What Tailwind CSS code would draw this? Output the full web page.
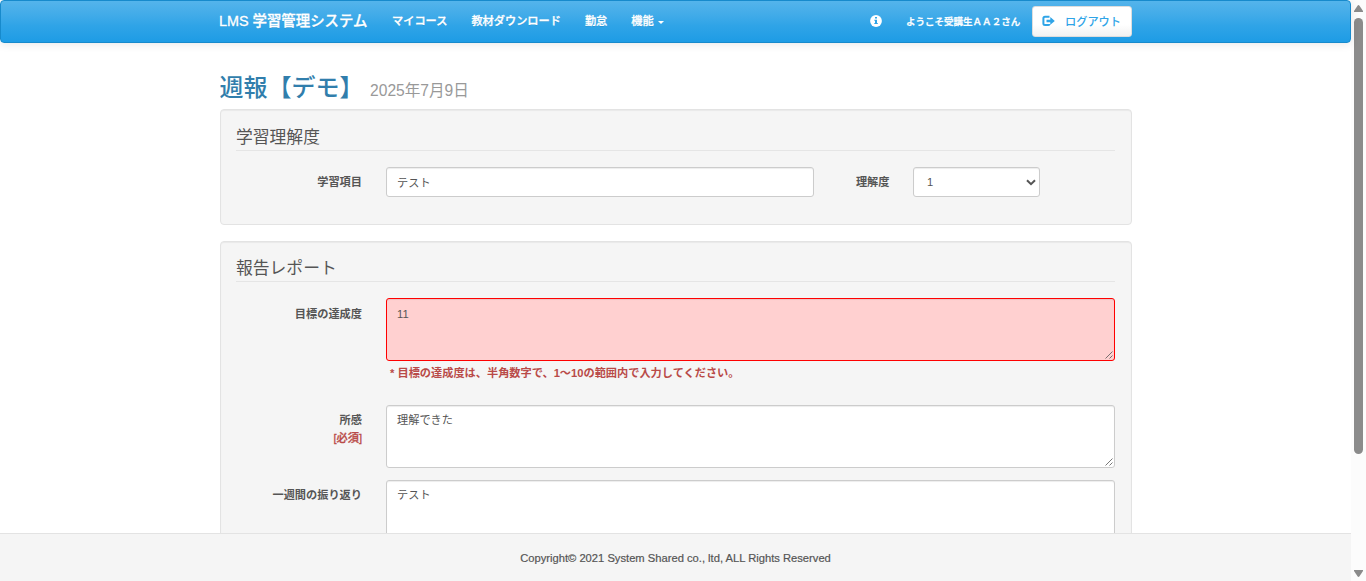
<!DOCTYPE html>
<html lang="ja">
<head>
<meta charset="utf-8">
<title>週報【デモ】</title>
<script src="https://cdn.jsdelivr.net/npm/@tailwindcss/browser@4"></script>
</head>
<body class="flex h-[581px] overflow-hidden bg-white font-['Liberation_Sans','Noto_Sans_CJK_JP',sans-serif] text-[11.2px] leading-[18px] text-[#555555]">
  <div class="flex h-[581px] w-[1351px] flex-none flex-col">
    <header class="relative z-10 flex h-[43px] flex-none rounded-[4px] border border-[#178acc] bg-linear-to-b from-[#54b4eb] via-[#2fa4e7] via-60% to-[#1d9ce5] pl-[218px] font-medium text-white shadow-[0_1px_10px_rgba(0,0,0,0.1)]">
      <div class="flex h-[41px] w-[913px] items-center whitespace-nowrap">
        <a class="w-[173px] -mt-0.5 text-[14.4px] [-webkit-text-stroke:0.3px_white] [text-shadow:0_1px_0_rgba(0,0,0,0.1)]">LMS 学習管理システム</a>
        <nav class="-mt-0.5 flex flex-1 items-center gap-[24px] [-webkit-text-stroke:0.3px_white] [text-shadow:0_1px_0_rgba(0,0,0,0.1)]">
          <a>マイコース</a>
          <a>教材ダウンロード</a>
          <a>勤怠</a>
          <a class="flex items-center gap-1">機能<span class="mt-[3px] border-x-[3px] border-t-[3px] border-x-transparent border-t-white"></span></a>
        </nav>
        <svg class="-mt-0.5 mr-6 size-3 flex-none" viewBox="0 0 12 12"><circle cx="6" cy="6" r="5.9" fill="#fff"/><path d="M5 2h2v1.6H5zM4.3 4.7H7v3.4h.8v1H4.300v-1H5V5.700h-.7z" fill="#2fa4e7"/></svg>
        <span class="w-[126px] text-[9.52px] [-webkit-text-stroke:0.3px_white]">ようこそ受講生ＡＡ２さん</span>
        <button class="flex h-[31px] w-[100px] items-center rounded-[3px] border border-[#dddddd] bg-linear-to-b from-white via-white via-60% to-[#f2f2f2] pl-[9px] text-[#2fa4e7]">
          <svg class="-mt-0.5 mr-[10px] h-3 w-[13px]" viewBox="0 0 13 12"><path d="M7.500 1.800H3Q1.400 1.800 1.400 3.300V8.500Q1.400 10 3 10H6.300Q7.500 10 7.500 9" fill="none" stroke="#2fa4e7" stroke-width="2"/><path d="M4.500 4.700H8.300V2L12.800 6 8.300 9.800V7.300H4.500z" fill="#2fa4e7"/></svg>
          <span>ログアウト</span>
        </button>
      </div>
    </header>

    <main class="ml-[220px] h-[490px] w-[912px] flex-none overflow-hidden">
      <h2 class="-ml-[0.6px] mt-[30px] flex h-[36px] items-baseline gap-[6.67px] whitespace-nowrap text-[24px] leading-[30px] font-medium text-[#317eac]"><span>週報【デモ】</span><small class="text-[15.6px] font-normal text-[#999999]">2025年7月9日</small></h2>

      <section class="h-[116px] rounded-[4px] border border-[#e3e3e3] bg-[#f5f5f5] px-[15px] shadow-[inset_0_1px_1px_rgba(0,0,0,0.05)]">
        <h3 class="h-[41px] w-[879px] border-b border-[#e5e5e5] pt-[16px] text-[16.8px] leading-6">学習理解度</h3>
        <div class="flex pt-4">
          <label class="w-[126px] pt-[6px] text-right font-bold">学習項目</label>
          <input value="テスト" class="ml-6 h-[30px] w-[428px] rounded-[3px] border border-[#cccccc] bg-white px-[10px] shadow-[inset_0_1px_1px_rgba(0,0,0,0.075)]">
          <label class="w-[75.5px] pt-[6px] text-right font-bold">理解度</label>
          <div class="ml-[23.5px] flex h-[30px] w-[127px] items-center justify-between rounded-[3px] border border-[#cccccc] bg-white pr-[3px] pl-[13px] shadow-[inset_0_1px_1px_rgba(0,0,0,0.075)]">
            <span>1</span>
            <svg class="h-[7px] w-[10px]" viewBox="0 0 10 7"><path d="M1 1.200 5 5.200 9 1.200" fill="none" stroke="#555" stroke-width="2"/></svg>
          </div>
        </div>
      </section>

      <section class="mt-4 h-[420px] rounded-[4px] border border-[#e3e3e3] bg-[#f5f5f5] px-[15px] shadow-[inset_0_1px_1px_rgba(0,0,0,0.05)]">
        <h3 class="h-[40px] w-[879px] border-b border-[#e5e5e5] pt-[15px] text-[16.8px] leading-6">報告レポート</h3>
        <div class="box-content flex h-[107px] pt-4">
          <label class="w-[126px] pt-[7px] text-right font-bold">目標の達成度</label>
          <div class="relative ml-6 w-[729px]">
            <textarea class="block h-[63px] w-full resize-none rounded-[3px] border border-[#ff0000] bg-[#ffd0d0] px-[10px] py-[6px] leading-[18px] shadow-[inset_0_1px_1px_rgba(0,0,0,0.075)]">11</textarea>
            <svg class="absolute top-[53px] right-[2px] size-2" viewBox="0 0 8 8"><path d="M.5 7.500 7.500.5M4.500 7.500 7.500 4.500" stroke="#555" stroke-width=".8"/></svg>
            <p class="pt-[3px] pl-1 font-bold text-[#b94a48]">* 目標の達成度は、半角数字で、1～10の範囲内で入力してください。</p>
          </div>
        </div>
        <div class="flex h-[75px]">
          <label class="w-[126px] pt-[7px] text-right leading-[17.500px] font-bold">所感<br><span class="font-medium text-[#b94a48] [-webkit-text-stroke:0.3px_#b94a48]">[必須]</span></label>
          <div class="relative ml-6 w-[729px]">
            <textarea class="block h-[63px] w-full resize-none rounded-[3px] border border-[#cccccc] bg-white px-[10px] py-[5px] leading-[18px] shadow-[inset_0_1px_1px_rgba(0,0,0,0.075)]">理解できた</textarea>
            <svg class="absolute top-[53px] right-[2px] size-2" viewBox="0 0 8 8"><path d="M.5 7.500 7.500.5M4.500 7.500 7.500 4.500" stroke="#555" stroke-width=".8"/></svg>
          </div>
        </div>
        <div class="flex">
          <label class="w-[126px] pt-[6px] text-right font-bold">一週間の振り返り</label>
          <textarea class="ml-6 block h-[63px] w-[729px] resize-none rounded-[3px] border border-[#cccccc] bg-white px-[10px] py-[5px] leading-[18px] shadow-[inset_0_1px_1px_rgba(0,0,0,0.075)]">テスト</textarea>
        </div>
      </section>
    </main>

    <footer class="h-12 flex-none border-t border-[#e3e3e3] bg-[#f5f5f5] pt-[15px] text-center text-[11.2px] [-webkit-text-stroke:0.2px_#555555]"><span>Copyright© 2021 System Shared co., ltd, ALL Rights Reserved</span></footer>
  </div>

  <div class="flex h-[581px] w-[15px] flex-none flex-col items-center bg-[#fcfcfc] pt-[5px]">
    <svg class="h-[7px] w-[9px]" viewBox="0 0 9 7"><path d="M0 7V6L3.500.7Q4.500-.5 5.500.7L9 6V7z" fill="#8b8b8b"/></svg>
    <div class="mt-[6px] h-[436px] w-[9px] rounded-full bg-[#8b8b8b]"></div>
    <svg class="mt-[116px] h-[7px] w-[9px]" viewBox="0 0 9 7"><path d="M0 0V1L3.500 6.300Q4.500 7.500 5.500 6.300L9 1V0z" fill="#8b8b8b"/></svg>
  </div>
</body>
</html>
